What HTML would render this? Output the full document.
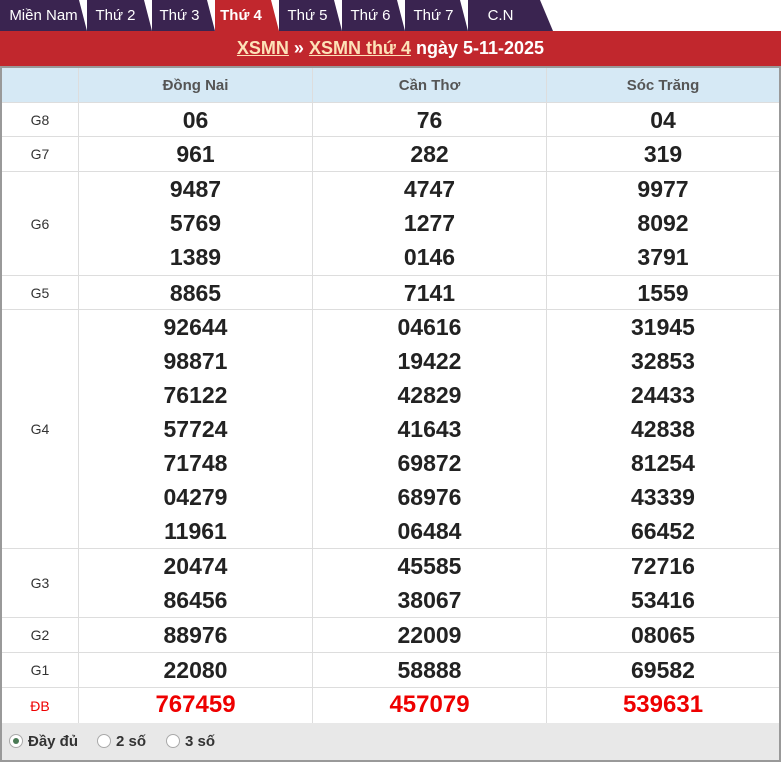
<!DOCTYPE html>
<html><head><meta charset="utf-8"><style>
*{margin:0;padding:0;box-sizing:border-box}
body{width:781px;height:762px;background:#fff;font-family:"Liberation Sans",Arial,sans-serif;position:relative;overflow:hidden}
.tab{position:absolute;top:0;height:31px;background:#3a2450;color:#fff;font-size:15px;line-height:31px;text-align:center}
.tab.a{background:#c1272d;font-weight:bold}
.bar{position:absolute;top:31px;left:0;width:781px;background:#c1272d;color:#fff;font-weight:bold;font-size:18px;line-height:35px;text-align:center;padding-left:0;border-bottom:2px solid #999;height:37px}
.bar u{color:#fde2b8}
.wrap{position:absolute;top:68px;left:0;width:781px;height:694px;border-left:2px solid #999;border-right:2px solid #999;border-bottom:2px solid #999}
.row{position:absolute;left:0;width:777px;border-bottom:1px solid #ddd}
.c{position:absolute;top:0;bottom:0;border-right:1px solid #ddd;text-align:center}
.l{left:0;width:77px;font-size:14px;color:#333;display:flex;align-items:center;justify-content:center}
.n{font-size:23px;font-weight:bold;color:#222;line-height:34px;padding-top:0}
.hd{background:#d6e9f5}
.hd .c{font-size:15px;font-weight:bold;color:#555;line-height:35px}
.db .l{color:#e00}.db .n{color:#e00;font-size:24px}
.ft{position:absolute;left:0;top:655px;width:777px;height:37px;background:#e8e8e8;font-size:15px;font-weight:bold;color:#333}
.ft span{position:absolute;top:10px}
.rd{position:absolute;top:11px;width:14px;height:14px;border-radius:50%;border:1px solid #aaa;background:#fff}
</style></head><body>
<div class="tab" style="left:0;width:87px;clip-path:polygon(0 0,79px 0,87px 31px,0 31px)">Miền Nam</div>
<div class="tab" style="left:87px;width:65px;clip-path:polygon(0 0,57px 0,65px 31px,0 31px);padding-right:14px;padding-left:6px">Thứ 2</div>
<div class="tab" style="left:152px;width:63px;clip-path:polygon(0 0,55px 0,63px 31px,0 31px);padding-right:10px;padding-left:2px">Thứ 3</div>
<div class="tab a" style="left:215px;width:64px;clip-path:polygon(0 0,56px 0,64px 31px,0 31px);padding-right:12px">Thứ 4</div>
<div class="tab" style="left:279px;width:63px;clip-path:polygon(0 0,55px 0,63px 31px,0 31px);padding-right:10px;padding-left:4px">Thứ 5</div>
<div class="tab" style="left:342px;width:63px;clip-path:polygon(0 0,55px 0,63px 31px,0 31px);padding-right:10px;padding-left:4px">Thứ 6</div>
<div class="tab" style="left:405px;width:63px;clip-path:polygon(0 0,55px 0,63px 31px,0 31px);padding-right:10px;padding-left:4px">Thứ 7</div>
<div class="tab" style="left:468px;width:85px;clip-path:polygon(0 0,72px 0,85px 31px,0 31px);padding-right:24px;padding-left:4px">C.N</div>
<div class="bar"><u>XSMN</u> » <u>XSMN thứ 4</u> ngày 5-11-2025</div>
<div class="wrap">
<div class="row hd" style="top:0;height:35px"><div class="c l"></div><div class="c" style="left:77px;width:234px">Đồng Nai</div><div class="c" style="left:311px;width:234px">Cần Thơ</div><div class="c" style="left:545px;width:232px;border:0">Sóc Trăng</div></div>
<div class="row" style="top:35px;height:34px"><div class="c l">G8</div><div class="c n" style="left:77px;width:234px">06</div><div class="c n" style="left:311px;width:234px">76</div><div class="c n" style="left:545px;width:232px;border:0">04</div></div>
<div class="row" style="top:69px;height:35px"><div class="c l">G7</div><div class="c n" style="left:77px;width:234px">961</div><div class="c n" style="left:311px;width:234px">282</div><div class="c n" style="left:545px;width:232px;border:0">319</div></div>
<div class="row" style="top:104px;height:104px"><div class="c l">G6</div><div class="c n" style="left:77px;width:234px">9487<br>5769<br>1389</div><div class="c n" style="left:311px;width:234px">4747<br>1277<br>0146</div><div class="c n" style="left:545px;width:232px;border:0">9977<br>8092<br>3791</div></div>
<div class="row" style="top:208px;height:34px"><div class="c l">G5</div><div class="c n" style="left:77px;width:234px">8865</div><div class="c n" style="left:311px;width:234px">7141</div><div class="c n" style="left:545px;width:232px;border:0">1559</div></div>
<div class="row" style="top:242px;height:239px"><div class="c l">G4</div><div class="c n" style="left:77px;width:234px">92644<br>98871<br>76122<br>57724<br>71748<br>04279<br>11961</div><div class="c n" style="left:311px;width:234px">04616<br>19422<br>42829<br>41643<br>69872<br>68976<br>06484</div><div class="c n" style="left:545px;width:232px;border:0">31945<br>32853<br>24433<br>42838<br>81254<br>43339<br>66452</div></div>
<div class="row" style="top:481px;height:69px"><div class="c l">G3</div><div class="c n" style="left:77px;width:234px">20474<br>86456</div><div class="c n" style="left:311px;width:234px">45585<br>38067</div><div class="c n" style="left:545px;width:232px;border:0">72716<br>53416</div></div>
<div class="row" style="top:550px;height:35px"><div class="c l">G2</div><div class="c n" style="left:77px;width:234px">88976</div><div class="c n" style="left:311px;width:234px">22009</div><div class="c n" style="left:545px;width:232px;border:0">08065</div></div>
<div class="row" style="top:585px;height:35px"><div class="c l">G1</div><div class="c n" style="left:77px;width:234px">22080</div><div class="c n" style="left:311px;width:234px">58888</div><div class="c n" style="left:545px;width:232px;border:0">69582</div></div>
<div class="row db" style="top:620px;height:35px;border:0"><div class="c l">ĐB</div><div class="c n" style="left:77px;width:234px">767459</div><div class="c n" style="left:311px;width:234px">457079</div><div class="c n" style="left:545px;width:232px;border:0">539631</div></div>
<div class="ft">
<div class="rd" style="left:7px"><div style="position:absolute;left:3px;top:3px;width:6px;height:6px;border-radius:50%;background:#4a7a55"></div></div><span style="left:26px">Đầy đủ</span>
<div class="rd" style="left:95px"></div><span style="left:114px">2 số</span>
<div class="rd" style="left:164px"></div><span style="left:183px">3 số</span>
</div>
</div>
</body></html>
